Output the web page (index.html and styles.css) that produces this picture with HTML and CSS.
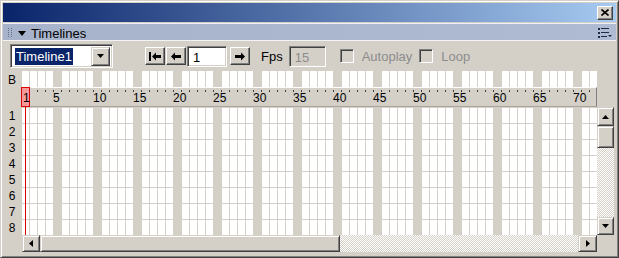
FILE: index.html
```html
<!DOCTYPE html>
<html>
<head>
    <title>Timelines</title>
    <meta charset="UTF-8">
    <link rel="stylesheet" href="styles.css">
</head>
<body>
<div class="window">
    <div class="titlebar">
        <span class="close-btn">
            <svg width="8" height="7" viewBox="0 0 8 7"><path d="M0.5 0.5 L7.5 6.5 M7.5 0.5 L0.5 6.5" stroke="#000" stroke-width="1.6"/></svg>
        </span>
    </div>

    <div class="panel-head">
        <svg class="gripper" width="5" height="10" viewBox="0 0 5 10" fill="#5f6e8c">
            <rect x="0" y="0" width="1" height="1"/><rect x="0" y="2" width="1" height="1"/><rect x="0" y="4" width="1" height="1"/><rect x="0" y="6" width="1" height="1"/><rect x="0" y="8" width="1" height="1"/>
            <rect x="3" y="0" width="1" height="1"/><rect x="3" y="2" width="1" height="1"/><rect x="3" y="4" width="1" height="1"/><rect x="3" y="6" width="1" height="1"/><rect x="3" y="8" width="1" height="1"/>
        </svg>
        <svg class="collapse" width="8" height="5" viewBox="0 0 8 5"><polygon points="0,0 8,0 4,5" fill="#000"/></svg>
        <span class="panel-title">Timelines</span>
        <svg class="options" width="14" height="10" viewBox="0 0 14 10" fill="#1c2a48">
            <rect x="0" y="0" width="2" height="2"/><rect x="3" y="0" width="8" height="1"/>
            <rect x="0" y="4" width="2" height="2"/><rect x="3" y="4" width="8" height="1"/>
            <rect x="0" y="8" width="2" height="2"/><rect x="3" y="8" width="6" height="1"/>
            <polygon points="10,7 14,7 12,9"/>
        </svg>
    </div>

    <div class="toolbar">
        <div class="combo">
            <span class="combo-text"><span class="selected">Timeline1</span></span>
            <span class="combo-btn">
                <svg width="7" height="4" viewBox="0 0 7 4"><polygon points="0,0 7,0 3.5,4" fill="#000"/></svg>
            </span>
        </div>

        <div class="nav">
            <span class="tool-btn">
                <svg width="12" height="9" viewBox="0 0 12 9" fill="#000"><rect x="0" y="0" width="2" height="9"/><polygon points="3,4.5 7,0.5 7,8.5"/><rect x="7" y="3" width="5" height="3"/></svg>
            </span>
            <span class="tool-btn">
                <svg width="10" height="9" viewBox="0 0 10 9" fill="#000"><polygon points="0,4.5 4,0.5 4,8.5"/><rect x="4" y="3" width="6" height="3"/></svg>
            </span>
            <span class="field frame-field">1</span>
            <span class="tool-btn next-btn">
                <svg width="10" height="9" viewBox="0 0 10 9" fill="#000"><polygon points="10,4.5 6,0.5 6,8.5"/><rect x="0" y="3" width="6" height="3"/></svg>
            </span>
        </div>

        <span class="fps-label">Fps</span>
        <span class="field fps-field">15</span>

        <span class="check"><span class="box"></span>Autoplay</span>
        <span class="check"><span class="box"></span>Loop</span>
    </div>

    <div class="timeline">
        <div class="row-label">B</div>
        <div class="frames"></div>
        <div></div>

        <div></div>
        <div class="ruler">
            <span>5</span><span>10</span><span>15</span><span>20</span><span>25</span><span>30</span><span>35</span>
            <span>40</span><span>45</span><span>50</span><span>55</span><span>60</span><span>65</span><span>70</span>
        </div>
        <div></div>

        <div class="layer-labels">
            <span>1</span><span>2</span><span>3</span><span>4</span><span>5</span><span>6</span><span>7</span><span>8</span>
        </div>
        <div class="frames layers"></div>
        <div class="vscroll">
            <span class="scroll-btn up-btn"><svg width="7" height="4" viewBox="0 0 7 4"><polygon points="0,4 7,4 3.5,0" fill="#000"/></svg></span>
            <span class="scroll-thumb v-thumb"></span>
            <span class="track"></span>
            <span class="scroll-btn down-btn"><svg width="7" height="4" viewBox="0 0 7 4"><polygon points="0,0 7,0 3.5,4" fill="#000"/></svg></span>
        </div>

        <div></div>
        <div class="hscroll">
            <span class="scroll-btn left-btn"><svg width="4" height="7" viewBox="0 0 4 7"><polygon points="4,0 4,7 0,3.5" fill="#000"/></svg></span>
            <span class="scroll-thumb h-thumb"></span>
            <span class="track"></span>
            <span class="scroll-btn right-btn"><svg width="4" height="7" viewBox="0 0 4 7"><polygon points="0,0 0,7 4,3.5" fill="#000"/></svg></span>
        </div>
        <div></div>

        <!-- playhead on frame 1 -->
        <div class="playhead-marker">1</div>
        <div class="playhead-line"></div>
    </div>
</div>
</body>
</html>
```

FILE: styles.css
```css
/* Timelines panel */
body {
    margin: 0;
    font-family: "Liberation Sans", Arial, sans-serif;
    font-size: 12px;
    background-color: #d4d0c8;
}

.window {
    width: 619px;
    height: 258px;
    box-sizing: border-box;
    background-color: #d4d0c8;
    border: 1px solid;
    border-color: #d4d0c8 #404040 #404040 #d4d0c8;
    box-shadow: inset 1px 1px #fff, inset -1px -1px #808080;
    padding: 2px 2px 2px 2px;
    display: flex;
    flex-direction: column;
}

.titlebar {
    height: 19px;
    flex: none;
    background: linear-gradient(to right, #0a246a, #a6caf0);
    display: flex;
    align-items: center;
    justify-content: flex-end;
    padding-right: 3px;
}

.close-btn {
    width: 16px;
    height: 14px;
    box-sizing: border-box;
    background-color: #d4d0c8;
    border: 1px solid;
    border-color: #fff #404040 #404040 #fff;
    box-shadow: inset -1px -1px #808080;
    display: flex;
    align-items: center;
    justify-content: center;
    padding: 0 1px 1px 0;
}

.close-btn svg {
    display: block;
}

.panel-head {
    height: 16px;
    flex: none;
    margin-top: 1px;
    border-top: 1px solid #eef0f6;
    border-bottom: 1px solid #f4f4f4;
    background: linear-gradient(to right, #a6b3cb, #aebbd2);
    display: flex;
    align-items: center;
    padding-left: 5px;
    padding-right: 4px;
}

.gripper {
    display: block;
    margin-top: 1px;
}

.collapse {
    display: block;
    margin-left: 5px;
    margin-top: 2px;
}

.panel-title {
    margin-left: 5px;
    padding-top: 3px;
    font-size: 13px;
    color: #000;
}

.options {
    display: block;
    margin-left: auto;
    margin-top: 2px;
}

.toolbar {
    height: 30px;
    flex: none;
    display: flex;
    align-items: center;
    padding-left: 7px;
}

.combo {
    width: 103px;
    height: 24px;
    box-sizing: border-box;
    border: 1px solid;
    border-color: #808080 #fff #fff #808080;
    box-shadow: inset 1px 1px #404040, inset -1px -1px #d4d0c8;
    background-color: #fff;
    display: flex;
    align-items: center;
    padding: 2px;
}

.combo-text {
    flex: 1;
    padding-left: 2px;
    font-size: 13px;
}

.selected {
    background-color: #0a246a;
    color: #fff;
    padding: 1px 1px;
}

.combo-btn {
    width: 19px;
    height: 19px;
    box-sizing: border-box;
    background-color: #d4d0c8;
    border: 1px solid;
    border-color: #d4d0c8 #404040 #404040 #d4d0c8;
    box-shadow: inset 1px 1px #fff, inset -1px -1px #808080;
    display: flex;
    align-items: center;
    justify-content: center;
}

.nav {
    display: flex;
    align-items: center;
    margin-left: 32px;
    gap: 1px;
}

.tool-btn {
    width: 20px;
    height: 18px;
    box-sizing: border-box;
    background-color: #d4d0c8;
    border: 1px solid;
    border-color: #fff #404040 #404040 #fff;
    box-shadow: inset -1px -1px #808080;
    display: flex;
    align-items: center;
    justify-content: center;
}

.tool-btn svg {
    display: block;
}

.next-btn {
    margin-left: 2px;
}

.field {
    height: 21px;
    box-sizing: border-box;
    border: 1px solid;
    border-color: #808080 #fff #fff #808080;
    box-shadow: inset 1px 1px #404040, inset -1px -1px #d4d0c8;
    background-color: #fff;
    padding: 3px 0 0 5px;
    font-size: 13px;
}

.frame-field {
    width: 40px;
}

.fps-label {
    margin-left: 11px;
    font-size: 13px;
}

.fps-field {
    width: 37px;
    margin-left: 6px;
    background-color: #d4d0c8;
    color: #8c8c8c;
}

.check {
    display: flex;
    align-items: center;
    color: #8c8c8c;
    font-size: 13px;
    margin-left: 14px;
}

.check + .check {
    margin-left: 7px;
}

.box {
    width: 14px;
    height: 14px;
    box-sizing: border-box;
    border: 1px solid;
    border-color: #808080 #fff #fff #808080;
    box-shadow: inset 1px 1px #404040, inset -1px -1px #d4d0c8;
    margin-right: 8px;
}

.timeline {
    position: relative;
    display: grid;
    grid-template-columns: 18px 576px 17px;
    grid-template-rows: 16px 20px 128px 17px;
}

.row-label {
    text-align: center;
    line-height: 18px;
}

.frames {
    background:
        repeating-linear-gradient(to right, transparent 0 32px, #d4d0c8 32px 40px),
        repeating-linear-gradient(to right, #d4d0c8 0 1px, transparent 1px 8px),
        #fff;
}

.layers {
    background:
        repeating-linear-gradient(to right, transparent 0 32px, #d4d0c8 32px 40px),
        repeating-linear-gradient(to right, #d4d0c8 0 1px, transparent 1px 8px),
        repeating-linear-gradient(to bottom, #d4d0c8 0 1px, #fff 1px 16px);
}

.ruler {
    box-sizing: border-box;
    border-top: 1px solid #fff;
    border-bottom: 1px solid #a8a49c;
    border-right: 1px solid #808080;
    background:
        repeating-linear-gradient(to right, #404040 0 1px, transparent 1px 8px) 0 2px / 100% 2px no-repeat,
        #d4d0c8;
    display: flex;
    padding-left: 32px;
    overflow: hidden;
    line-height: 21px;
}

.ruler span {
    flex: none;
    width: 40px;
}

.layer-labels {
    display: flex;
    flex-direction: column;
}

.layer-labels span {
    height: 16px;
    line-height: 18px;
    text-align: center;
}

.vscroll {
    display: flex;
    flex-direction: column;
}

.hscroll {
    display: flex;
    padding-left: 1px;
}

.scroll-btn,
.scroll-thumb {
    box-sizing: border-box;
    background-color: #d4d0c8;
    border: 1px solid;
    border-color: #d4d0c8 #404040 #404040 #d4d0c8;
    box-shadow: inset 1px 1px #fff, inset -1px -1px #808080;
    display: flex;
    align-items: center;
    justify-content: center;
    flex: none;
}

.scroll-btn svg {
    display: block;
}

.up-btn {
    height: 19px;
}

.v-thumb {
    height: 22px;
}

.down-btn {
    height: 18px;
}

.left-btn {
    width: 18px;
}

.h-thumb {
    width: 300px;
}

.right-btn {
    width: 19px;
}

.track {
    flex: 1;
    background: repeating-conic-gradient(#fff 0 25%, #d4d0c8 0 50%) 0 0 / 2px 2px;
}

.playhead-marker {
    position: absolute;
    left: 18px;
    top: 16px;
    width: 9px;
    height: 20px;
    box-sizing: border-box;
    border: 1px solid #e00000;
    background-color: #f29a9a;
    line-height: 21px;
    padding-left: 1px;
}

.playhead-line {
    position: absolute;
    left: 22px;
    top: 36px;
    width: 1px;
    height: 128px;
    background-color: #e00000;
}
```
